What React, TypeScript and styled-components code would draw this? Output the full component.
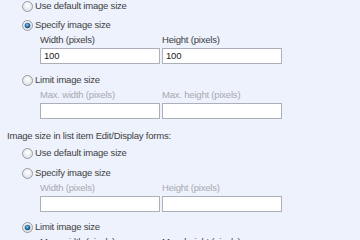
import { createGlobalStyle } from "styled-components";
import styled from "styled-components";

const GlobalStyle = createGlobalStyle`
  html, body {
    margin: 0;
    padding: 0;
    background: #eef2fd;
  }
  body {
    font-family: "Liberation Sans", Arial, sans-serif;
    font-size: 9.5px;
    letter-spacing: -0.2px;
    color: #404040;
  }
`;

interface IRadioProps {
  label: string;
  checked?: boolean;
  gap?: number;
}

const Radio = ({ label, checked, gap = 8 }: IRadioProps) => (
  <RadioRow $gap={gap}>
    <svg width="11" height="11" viewBox="0 0 11 11">
      <defs>
        <radialGradient id="off" cx="0.5" cy="0.4" r="0.6">
          <stop offset="0" stopColor="#ffffff" />
          <stop offset="1" stopColor="#dcdfe4" />
        </radialGradient>
        <radialGradient id="on" cx="0.45" cy="0.4" r="0.6">
          <stop offset="0" stopColor="#8cc8f0" />
          <stop offset="0.6" stopColor="#2a6fa8" />
          <stop offset="1" stopColor="#123c64" />
        </radialGradient>
      </defs>
      <circle cx="5.5" cy="5.5" r="5" fill="url(#off)" stroke="#979ca3" />
      {checked && <circle cx="5.5" cy="5.5" r="2.8" fill="url(#on)" />}
    </svg>
    <span>{label}</span>
  </RadioRow>
);

interface ISizeFieldsProps {
  first: string;
  second: string;
  disabled?: boolean;
  values?: [string, string];
}

const SizeFields = ({ first, second, disabled, values }: ISizeFieldsProps) => (
  <FieldGrid>
    <FieldLabel $disabled={disabled}>{first}</FieldLabel>
    <FieldLabel $disabled={disabled}>{second}</FieldLabel>
    <TextBox>{values?.[0]}</TextBox>
    <TextBox>{values?.[1]}</TextBox>
  </FieldGrid>
);

export default function App() {
  return (
    <Page>
      <GlobalStyle />
      <Options>
        <Radio label="Use default image size" gap={0} />
        <Radio label="Specify image size" checked gap={7} />
        <SizeFields
          first="Width (pixels)"
          second="Height (pixels)"
          values={["100", "100"]}
        />
        <Radio label="Limit image size" gap={10} />
        <SizeFields
          first="Max. width (pixels)"
          second="Max. height (pixels)"
          disabled
        />
      </Options>
      <Heading>Image size in list item Edit/Display forms:</Heading>
      <Options>
        <Radio label="Use default image size" gap={6} />
        <Radio label="Specify image size" />
        <SizeFields first="Width (pixels)" second="Height (pixels)" disabled />
        <Radio label="Limit image size" checked gap={9} />
        <SizeFields
          first="Max. width (pixels)"
          second="Max. height (pixels)"
        />
      </Options>
    </Page>
  );
}

const Page = styled.div`
  width: 360px;
  height: 240px;
  overflow: hidden;
`;

const Options = styled.div`
  display: flex;
  flex-direction: column;
  padding-left: 22px;
`;

const RadioRow = styled.div<{ $gap: number }>`
  display: flex;
  align-items: center;
  gap: 2px;
  height: 12px;
  margin-top: ${(p) => p.$gap}px;
  line-height: 12px;
  white-space: nowrap;

  svg {
    flex: none;
  }
`;

const FieldGrid = styled.div`
  display: grid;
  grid-template-columns: 120px 120px;
  column-gap: 2px;
  row-gap: 3px;
  margin: 4px 0 0 18px;
`;

const FieldLabel = styled.span<{ $disabled?: boolean }>`
  height: 10px;
  line-height: 10px;
  color: ${(p) => (p.$disabled ? "#a7a9ad" : "#404040")};
  white-space: nowrap;
`;

const TextBox = styled.div`
  box-sizing: border-box;
  height: 16px;
  padding: 0 3px;
  line-height: 14px;
  background: #fff;
  border: 1px solid #abb0b8;
  color: #222;
`;

const Heading = styled.div`
  margin: 12px 0 0 7px;
  height: 10px;
  line-height: 10px;
`;
